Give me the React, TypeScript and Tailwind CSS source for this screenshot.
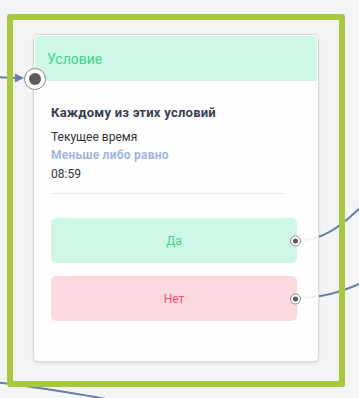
const font = { fontFamily: 'Roboto, "Noto Sans", sans-serif' }

function OutHandle() {
  return (
    <span className="absolute right-[-4px] top-1/2 -translate-y-1/2 w-[11px] h-[11px] rounded-full bg-white border-[1.5px] border-[#8a8a8a] flex items-center justify-center">
      <span className="w-[5px] h-[5px] rounded-full bg-[#5a5a5a]" />
    </span>
  )
}

export default function App() {
  return (
    <div className="relative w-[359px] h-[398px] overflow-hidden bg-[#f3f4f6] pt-[14px] pl-[7px]" style={font}>
      {/* edges between nodes */}
      <svg className="absolute inset-0" width="359" height="398" viewBox="0 0 359 398" fill="none">
        <path d="M -5 77 L 16 78" stroke="#6b7ea6" strokeWidth="2" />
        <path d="M 15 73.5 L 24 78 L 15 82.5 Z" fill="#6b7ea6" />
        <path d="M 296 241 C 320 240, 336 232, 366 202" stroke="#6b7ea6" strokeWidth="2" />
        <path d="M 296 298 C 320 298, 340 293, 366 281" stroke="#6b7ea6" strokeWidth="2" />
        <path d="M -5 382 C 40 388, 80 393, 125 403" stroke="#6b7ea6" strokeWidth="2" />
      </svg>

      <div className="relative w-[338px] h-[373px] border-[6px] border-[#a6c93d] rounded-[3px] pl-[20px] pt-[14px]">
        <div className="relative w-[286px] h-[328px] bg-white/90 border border-[#dadada] rounded-[5px] shadow-sm flex flex-col">
          <div className="mx-[1px] mt-[1px] h-[45px] bg-[#cff7e5] rounded-t-[4px] flex items-center pl-[12px] pt-[1px] text-[14px] text-[#3dd68c]">
            Условие
          </div>
          <span className="absolute left-[-10px] top-[33px] w-[22px] h-[22px] rounded-full bg-white border-[1.5px] border-[#8c8c8c] flex items-center justify-center">
            <span className="w-[12px] h-[12px] rounded-full bg-[#5b5b5b]" />
          </span>

          <div className="pl-[17px] pt-[23px]">
            <div className="text-[13px] leading-[18px] font-bold tracking-[0.25px] text-[#373f4e]">Каждому из этих условий</div>
            <div className="mt-[6px] text-[12px] leading-[18px] text-[#333]">Текущее время</div>
            <div className="text-[12px] leading-[19px] font-bold tracking-[0.25px] text-[#a3b5d8]">Меньше либо равно</div>
            <div className="text-[12px] leading-[18px] text-[#333]">08:59</div>
            <div className="mt-[10px] w-[235px] h-px bg-[#ebebeb]" />

            <div className="mt-[24px] flex flex-col gap-[13px] w-[246px]">
              <div className="relative h-[45px] rounded-[5px] bg-[#cff7e5] flex items-center justify-center text-[12px] text-[#3dd68c]">
                Да
                <OutHandle />
              </div>
              <div className="relative h-[45px] rounded-[5px] bg-[#fcd9df] flex items-center justify-center text-[12px] text-[#ef5470]">
                Нет
                <OutHandle />
              </div>
            </div>
          </div>
        </div>
      </div>
    </div>
  )
}
